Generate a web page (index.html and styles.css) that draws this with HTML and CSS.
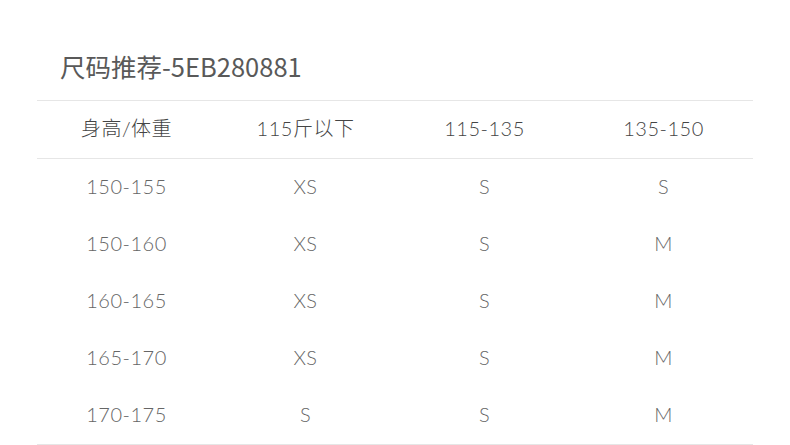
FILE: index.html
```html
<!DOCTYPE html>
<html lang="zh">
<head>
<meta charset="utf-8">
<link rel="stylesheet" href="styles.css">
</head>
<body>
<div class="page">
  <h1 class="title">尺码推荐-5EB280881</h1>
  <div class="table">
    <div class="row head">
      <div class="cell">身高/体重</div>
      <div class="cell">115斤以下</div>
      <div class="cell">115-135</div>
      <div class="cell">135-150</div>
    </div>
    <div class="row">
      <div class="cell">150-155</div><div class="cell">XS</div><div class="cell">S</div><div class="cell">S</div>
    </div>
    <div class="row">
      <div class="cell">150-160</div><div class="cell">XS</div><div class="cell">S</div><div class="cell">M</div>
    </div>
    <div class="row">
      <div class="cell">160-165</div><div class="cell">XS</div><div class="cell">S</div><div class="cell">M</div>
    </div>
    <div class="row">
      <div class="cell">165-170</div><div class="cell">XS</div><div class="cell">S</div><div class="cell">M</div>
    </div>
    <div class="row last">
      <div class="cell">170-175</div><div class="cell">S</div><div class="cell">S</div><div class="cell">M</div>
    </div>
  </div>
</div>
</body>
</html>
```

FILE: styles.css
```css
html, body {
  margin: 0;
  padding: 0;
  background: #ffffff;
}
.page {
  width: 790px;
  height: 445px;
  overflow: hidden;
  padding: 0 37px;
  box-sizing: border-box;
  font-family: "Lato", "Noto Sans CJK SC", sans-serif;
}
.title {
  margin: 0;
  padding: 48px 0 0 23px;
  height: 100px;
  box-sizing: border-box;
  font-family: "Noto Sans CJK SC", sans-serif;
  font-weight: 400;
  font-size: 25.5px;
  line-height: 36px;
  color: #595959;
}
.table {
  border-top: 1px solid #e6e6e6;
}
.row {
  display: grid;
  grid-template-columns: repeat(4, 1fr);
  height: 57px;
  align-items: center;
}
.row.head {
  border-bottom: 1px solid #e6e6e6;
}
.row.last {
  border-bottom: 1px solid #e6e6e6;
}
.cell {
  text-align: center;
  font-size: 20px;
  font-weight: 300;
  letter-spacing: 0.5px;
  line-height: 24px;
  padding-bottom: 3px;
  color: #666666;
}
.head .cell {
  color: #444444;
}
```
